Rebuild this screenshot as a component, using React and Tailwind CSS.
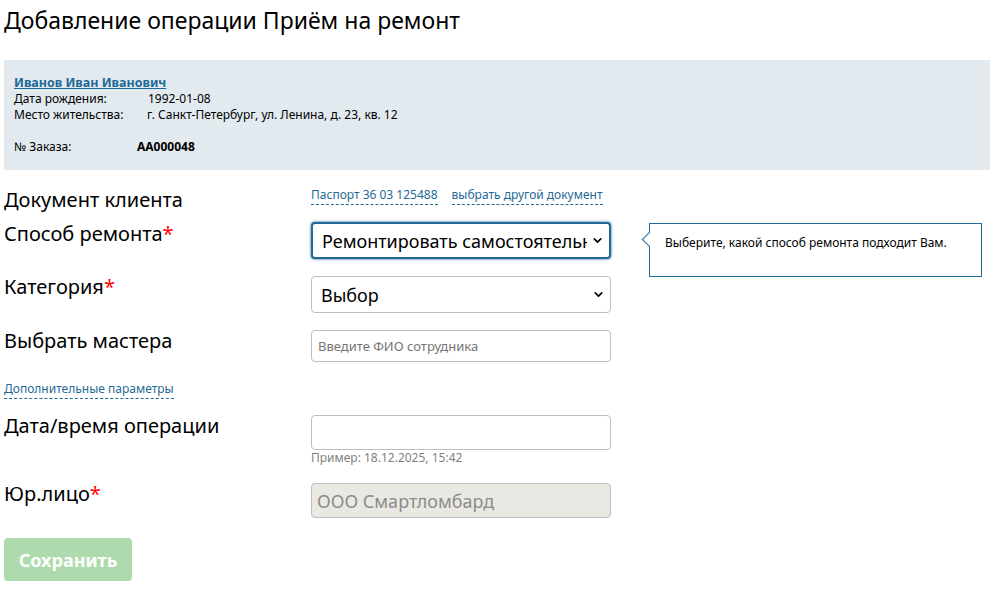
import { ChevronDown } from 'lucide-react'

const font = { fontFamily: '"Noto Sans", sans-serif' }

function Req() {
  return <span className="text-[#f00]">*</span>
}

function Select({ value, focused }) {
  return (
    <div
      className={`flex items-center w-[300px] h-[37px] rounded-[4px] bg-white pl-[9px] pr-[5px] ${
        focused ? 'border-2 border-[#1f6a96] shadow-[0_0_3px_#1f6a96]' : 'border border-[#bdbdbd]'
      }`}
    >
      <span className="flex-1 overflow-hidden whitespace-nowrap text-[18px] leading-[24px] text-black">{value}</span>
      <ChevronDown size={13} strokeWidth={3} className="ml-1 shrink-0 text-black" />
    </div>
  )
}

export default function App() {
  return (
    <div className="w-[990px] h-[599px] overflow-hidden bg-white text-black" style={font}>
      <h1 className="pl-1 pt-[3px] h-[60px] text-[23px] leading-[34px]">Добавление операции Приём на ремонт</h1>

      {/* Client panel */}
      <div className="ml-1 h-[110px] bg-[#e2eaef] pl-[10px] pt-[15px] text-[12px] leading-[16px]">
        <a className="font-bold underline text-[#1f6a96] text-[12.5px]">Иванов Иван Иванович</a>
        <div className="flex">
          <span className="w-[134px]">Дата рождения:</span>
          <span>1992-01-08</span>
        </div>
        <div className="flex">
          <span className="w-[133px]">Место жительства:</span>
          <span>г. Санкт-Петербург, ул. Ленина, д. 23, кв. 12</span>
        </div>
        <div className="flex mt-[16px]">
          <span className="w-[123px]">№ Заказа:</span>
          <span className="font-bold">АА000048</span>
        </div>
      </div>

      {/* Form */}
      <div className="pl-1 text-[20px] leading-[28px]">
        <div className="grid grid-cols-[307px_1fr] h-[53px] pt-[16px]">
          <span>Документ клиента</span>
          <div className="flex gap-[14px] text-[12px] leading-[16px] text-[#1f6a96] pt-[1px]">
            <a className="h-[18px] border-b border-dashed border-[#1f6a96]">Паспорт 36 03 125488</a>
            <a className="h-[18px] border-b border-dashed border-[#1f6a96]">выбрать другой документ</a>
          </div>
        </div>

        <div className="grid grid-cols-[307px_1fr] h-[53px]">
          <span className="-mt-[3px]">Способ ремонта<Req /></span>
          <div className="relative -mt-[1px]">
            <Select value="Ремонтировать самостоятельно" focused />
            <div className="absolute left-[338px] top-[1px] w-[333px] h-[54px] border border-[#1f6a96] bg-white pl-[15px] pt-[11px] text-[12px] leading-[16px]">
              Выберите, какой способ ремонта подходит Вам.
              <span className="absolute -left-[6px] top-[10px] size-[11px] rotate-45 border-b border-l border-[#1f6a96] bg-white" />
            </div>
          </div>
        </div>

        <div className="grid grid-cols-[307px_1fr] h-[54px]">
          <span className="-mt-[3px]">Категория<Req /></span>
          <Select value="Выбор" />
        </div>

        <div className="grid grid-cols-[307px_1fr] h-[46px]">
          <span className="-mt-[3px]">Выбрать мастера</span>
          <div className="flex items-center w-[300px] h-[32px] rounded-[4px] border border-[#bdbdbd] pl-[6px] text-[13px] text-[#757575]">
            Введите ФИО сотрудника
          </div>
        </div>

        <div className="h-[39px] pt-[5px] text-[12px] leading-[16px] text-[#1f6a96]">
          <a className="inline-block h-[18px] border-b border-dashed border-[#1f6a96]">Дополнительные параметры</a>
        </div>

        <div className="grid grid-cols-[307px_1fr] h-[68px]">
          <span className="-mt-[3px]">Дата/время операции</span>
          <div>
            <div className="w-[300px] h-[35px] rounded-[4px] border border-[#bdbdbd]" />
            <p className="text-[12px] leading-[16px] text-[#808080]">Пример: 18.12.2025, 15:42</p>
          </div>
        </div>

        <div className="grid grid-cols-[307px_1fr] h-[55px]">
          <span className="-mt-[3px]">Юр.лицо<Req /></span>
          <div className="flex items-center w-[300px] h-[35px] rounded-[4px] border border-[#bdbdbd] bg-[#e9e8e2] pl-[5px] text-[18px] text-[#8c8c8c]">
            ООО Смартломбард
          </div>
        </div>

        <button className="w-[128px] h-[43px] rounded-[4px] bg-[#aedbae] text-[18px] font-bold text-white">Сохранить</button>
      </div>
    </div>
  )
}
